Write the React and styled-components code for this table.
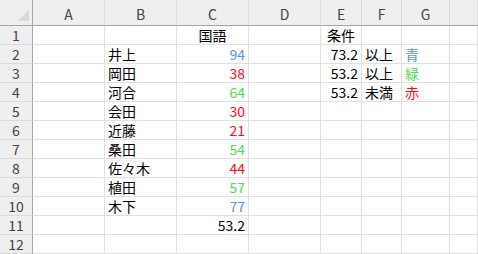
import React from 'react';
import styled, { createGlobalStyle } from 'styled-components';

const GlobalStyle = createGlobalStyle`
    html, body {
        margin: 0;
        padding: 0;
        background: #ffffff;
    }
    body {
        font-family: "Noto Sans CJK JP", "Noto Sans", sans-serif;
    }
`;

const Sheet = styled.div`
    display: grid;
    grid-template-columns: 33px 72px 72px 72px 72px 41px 40px 48px 28px;
    grid-auto-rows: 19px;
    grid-template-rows: 26px;
    width: 478px;
    height: 254px;
    overflow: hidden;
    background: #ffffff;
`;

const Corner = styled.div`
    position: relative;
    background: #efefef;
    border-right: 1px solid #a6a6a6;
    border-bottom: 1px solid #a6a6a6;
`;

const CornerMark = styled.div`
    position: absolute;
    right: 3px;
    bottom: 4px;
    width: 0;
    height: 0;
    border-left: 11px solid transparent;
    border-bottom: 11px solid #dadada;
`;

const ColHead = styled.div`
    display: flex;
    align-items: center;
    justify-content: center;
    padding-top: 2px;
    background: #efefef;
    border-right: 1px solid #dadada;
    border-bottom: 1px solid #a6a6a6;
    font-size: 14px;
    color: #444444;
`;

const RowHead = styled.div`
    display: flex;
    align-items: center;
    justify-content: center;
    background: #efefef;
    border-right: 1px solid #a6a6a6;
    border-bottom: 1px solid #dadada;
    font-size: 14px;
    line-height: 1;
    color: #444444;
`;

const Cell = styled.div`
    display: flex;
    align-items: center;
    justify-content: ${p => (p.$align === 'right' ? 'flex-end' : p.$align === 'center' ? 'center' : 'flex-start')};
    padding: 0 3px 0 3px;
    border-right: 1px solid #e1e1e1;
    border-bottom: 1px solid #e1e1e1;
    font-size: 14px;
    line-height: 1;
    color: ${p => p.$color || '#000000'};
    white-space: nowrap;
    overflow: visible;
`;

const BLUE = '#5b95dc';
const RED = '#ff0a1e';
const GREEN = '#5ad35a';

const cols = ['A', 'B', 'C', 'D', 'E', 'F', 'G', ''];

const scores = [
    ['井上', 94, BLUE],
    ['岡田', 38, RED],
    ['河合', 64, GREEN],
    ['会田', 30, RED],
    ['近藤', 21, RED],
    ['桑田', 54, GREEN],
    ['佐々木', 44, RED],
    ['植田', 57, GREEN],
    ['木下', 77, BLUE],
];

const rules = [
    ['73.2', '以上', '青', BLUE],
    ['53.2', '以上', '緑', GREEN],
    ['53.2', '未満', '赤', RED],
];

const App = () => {
    const rows = [];

    // row 1: headings
    rows.push(
        <React.Fragment key="r1">
            <RowHead>1</RowHead>
            <Cell />
            <Cell />
            <Cell $align="center">国語</Cell>
            <Cell />
            <Cell $align="center">条件</Cell>
            <Cell />
            <Cell />
            <Cell />
        </React.Fragment>
    );

    scores.forEach(([name, score, color], i) => {
        const rule = rules[i];
        rows.push(
            <React.Fragment key={name}>
                <RowHead>{i + 2}</RowHead>
                <Cell />
                <Cell>{name}</Cell>
                <Cell $align="right" $color={color}>{score}</Cell>
                <Cell />
                <Cell $align="right">{rule ? rule[0] : ''}</Cell>
                <Cell>{rule ? rule[1] : ''}</Cell>
                <Cell $color={rule ? rule[3] : undefined}>{rule ? rule[2] : ''}</Cell>
                <Cell />
            </React.Fragment>
        );
    });

    rows.push(
        <React.Fragment key="r11">
            <RowHead>11</RowHead>
            <Cell />
            <Cell />
            <Cell $align="right">53.2</Cell>
            <Cell />
            <Cell />
            <Cell />
            <Cell />
            <Cell />
        </React.Fragment>
    );

    rows.push(
        <React.Fragment key="r12">
            <RowHead>12</RowHead>
            {cols.map((c, i) => <Cell key={i} />)}
        </React.Fragment>
    );

    return (
        <>
            <GlobalStyle />
            <Sheet>
                <Corner><CornerMark /></Corner>
                {cols.map((c, i) => <ColHead key={i}>{c}</ColHead>)}
                {rows}
            </Sheet>
        </>
    );
};

export default App;
